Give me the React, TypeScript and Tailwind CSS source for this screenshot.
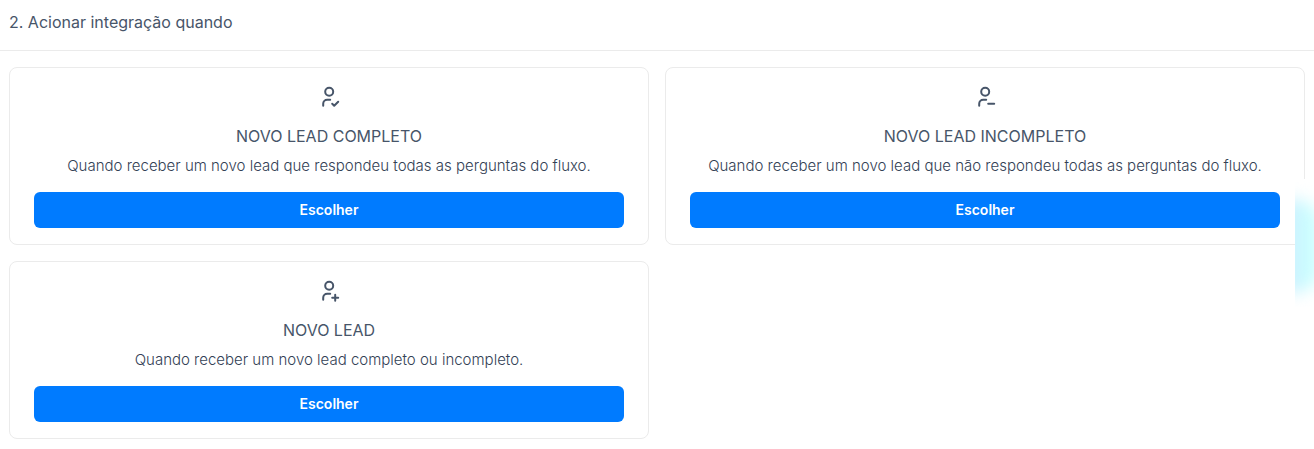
import type { ReactNode } from "react";

type Trigger = {
  title: string;
  description: string;
  mark: ReactNode;
};

const triggers: Trigger[] = [
  {
    title: "NOVO LEAD COMPLETO",
    description: "Quando receber um novo lead que respondeu todas as perguntas do fluxo.",
    mark: <path d="M15 19l2 2l4 -4" />,
  },
  {
    title: "NOVO LEAD INCOMPLETO",
    description: "Quando receber um novo lead que não respondeu todas as perguntas do fluxo.",
    mark: <path d="M15 19h6" />,
  },
  {
    title: "NOVO LEAD",
    description: "Quando receber um novo lead completo ou incompleto.",
    mark: <path d="M15 19h6M18 16v6" />,
  },
];

function UserIcon({ children }: { children: ReactNode }) {
  return (
    <svg
      className="size-6"
      viewBox="-0.2 -0.7 24 24"
      fill="none"
      stroke="currentColor"
      strokeWidth="2"
      strokeLinecap="round"
      strokeLinejoin="round"
      aria-hidden="true"
    >
      <circle cx="12" cy="7" r="4" />
      <path d="M6 21v-2a4 4 0 0 1 4 -4h3" />
      {children}
    </svg>
  );
}

function TriggerCard({ title, description, mark }: Trigger) {
  return (
    <article className="flex flex-col items-center rounded-lg border border-[#ebebeb] px-6 py-4 text-center">
      <UserIcon>{mark}</UserIcon>
      <h3 className="mt-4 text-base leading-6">{title}</h3>
      <p className="mt-2 text-[15px] leading-5 font-light text-[#334155]">{description}</p>
      <button
        type="button"
        className="mt-4 h-9 w-full rounded-md bg-[#007bff] text-sm font-semibold text-white"
      >
        Escolher
      </button>
    </article>
  );
}

export default function App() {
  return (
    <main className="relative bg-white font-['Inter','Liberation_Sans',sans-serif] text-[#475569]">
      <header className="border-b border-[#ebebeb] px-[9px] pt-2.5 pb-4">
        <h2 className="text-base leading-6">2. Acionar integração quando</h2>
      </header>
      <section className="grid grid-cols-2 gap-4 px-[9px] py-4">
        {triggers.map((trigger) => (
          <TriggerCard key={trigger.title} {...trigger} />
        ))}
      </section>
      <div className="absolute top-[179px] right-0 h-32 w-[19px] overflow-hidden bg-white" aria-hidden="true">
        <div className="absolute top-5 -left-6 h-[94px] w-12 rounded-[24px] bg-linear-to-r from-[#d0f0ff] from-50% to-[#c8ffff] to-70% blur-[8px]" />
      </div>
    </main>
  );
}
